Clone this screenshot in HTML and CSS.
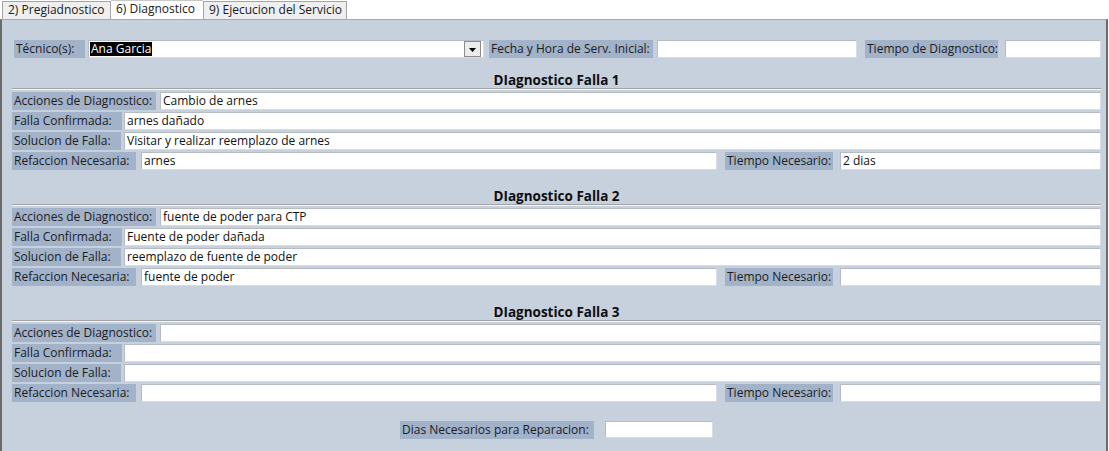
FILE: index.html
```html
<!DOCTYPE html>
<html>
<head>
<meta charset="utf-8">
<link rel="stylesheet" href="styles.css">
</head>
<body>
<div class="tabs">
  <div class="tab t1">2) Pregiadnostico</div>
  <div class="tab active t2">6) Diagnostico</div>
  <div class="tab t3">9) Ejecucion del Servicio</div>
</div>
<div class="panel">
  <div class="row top">
    <div class="lbl w-tec">Técnico(s):</div>
    <div class="inp combo ml3"><span class="sel">Ana Garcia</span><span class="drop"><svg width="7" height="4" viewBox="0 0 7 4"><path d="M0 0H7L3.5 4Z" fill="#000"/></svg></span></div>
    <div class="lbl w-fecha ml5">Fecha y Hora de Serv. Inicial:</div>
    <div class="inp w-fin ml4"></div>
    <div class="lbl w-tdiag ml8">Tiempo de Diagnostico:</div>
    <div class="inp w-tdin ml7"></div>
  </div>

  <div class="section s1">
    <div class="title">DIagnostico Falla 1</div>
    <div class="sep"></div>
    <div class="row"><div class="lbl w-acc">Acciones de Diagnostico:</div><div class="inp grow ml4">Cambio de arnes</div></div>
    <div class="row"><div class="lbl w-fal">Falla Confirmada:</div><div class="inp grow ml2">arnes dañado</div></div>
    <div class="row"><div class="lbl w-sol">Solucion de Falla:</div><div class="inp grow ml3">Visitar y realizar reemplazo de arnes</div></div>
    <div class="row"><div class="lbl w-ref">Refaccion Necesaria:</div><div class="inp w-refin ml5">arnes</div><div class="lbl w-tnec ml8">Tiempo Necesario:</div><div class="inp grow ml7">2 dias</div></div>
  </div>

  <div class="section s2">
    <div class="title">DIagnostico Falla 2</div>
    <div class="sep"></div>
    <div class="row"><div class="lbl w-acc">Acciones de Diagnostico:</div><div class="inp grow ml4">fuente de poder para CTP</div></div>
    <div class="row"><div class="lbl w-fal">Falla Confirmada:</div><div class="inp grow ml2">Fuente de poder dañada</div></div>
    <div class="row"><div class="lbl w-sol">Solucion de Falla:</div><div class="inp grow ml3">reemplazo de fuente de poder</div></div>
    <div class="row"><div class="lbl w-ref">Refaccion Necesaria:</div><div class="inp w-refin ml5">fuente de poder</div><div class="lbl w-tnec ml8">Tiempo Necesario:</div><div class="inp grow ml7"></div></div>
  </div>

  <div class="section s3">
    <div class="title">DIagnostico Falla 3</div>
    <div class="sep"></div>
    <div class="row"><div class="lbl w-acc">Acciones de Diagnostico:</div><div class="inp grow ml4"></div></div>
    <div class="row"><div class="lbl w-fal">Falla Confirmada:</div><div class="inp grow ml2"></div></div>
    <div class="row"><div class="lbl w-sol">Solucion de Falla:</div><div class="inp grow ml3"></div></div>
    <div class="row"><div class="lbl w-ref">Refaccion Necesaria:</div><div class="inp w-refin ml5"></div><div class="lbl w-tnec ml8">Tiempo Necesario:</div><div class="inp grow ml7"></div></div>
  </div>

  <div class="row dias">
    <div class="lbl w-dias">Dias Necesarios para Reparacion:</div>
    <div class="inp w-diasin ml11"></div>
  </div>
</div>
</body>
</html>
```

FILE: styles.css
```css
* { box-sizing: border-box; }
html, body { margin: 0; padding: 0; background: #ffffff; }
body {
  width: 1109px;
  height: 451px;
  overflow: hidden;
  font-family: "Open Sans", "Noto Sans", "DejaVu Sans", sans-serif;
  font-size: 12px;
  color: #1a1a1a;
}
.tabs {
  display: flex;
  height: 19px;
  padding-left: 2px;
  align-items: flex-end;
}
.tab {
  height: 18px;
  line-height: 16px;
  padding: 0 5px;
  background: #efefef;
  border: 1px solid #a4a4a4;
  border-bottom: none;
  font-size: 12px;
  color: #202020;
  white-space: nowrap;
}
.tab.active {
  height: 19px;
  background: #ffffff;
  line-height: 15px;
  border-color: #c8c8c8;
}
.t1 { width: 109px; }
.t2 { width: 92px; border-left: none; border-right: none; }
.t3 { width: 144px; }
.panel {
  height: 432px;
  width: 1108px;
  background: #c7d1dd;
  border-left: 2px solid #6a6a6a;
  border-right: 2px solid #6a6a6a;
  border-top: 1px solid #a8a8a8;
  padding: 20px 0 0 10px;
}
.row {
  display: flex;
  height: 18px;
  margin-bottom: 2px;
  width: 1089px;
}
.row.top { padding-left: 2px; }
.lbl {
  height: 18px;
  line-height: 17px;
  background: #a1b2c9;
  padding-left: 2px;
  white-space: nowrap;
  flex: none;
  color: #1c1c1c;
  overflow: hidden;
}
.inp {
  height: 18px;
  line-height: 16px;
  background: #ffffff;
  border: 1px solid #b6bcc4;
  border-right-color: #d8dce2;
  border-bottom-color: #d8dce2;
  padding-left: 2px;
  white-space: nowrap;
  flex: none;
  color: #111;
}
.grow { flex: 1 1 auto; }
.combo {
  width: 396px;
  position: relative;
  padding-left: 1px;
}
.sel {
  display: inline-block;
  background: #000;
  color: #fff;
  line-height: 14px;
  margin-top: 1px;
  padding: 0 1px;
}
.drop {
  position: absolute;
  right: 2px;
  top: 0;
  width: 17px;
  height: 16px;
  border: 1px solid #8c8c8c;
  background: #ececec;
  display: flex;
  align-items: center;
  justify-content: center;
}
.drop svg { display: block; margin-top: 2px; }
.ml2 { margin-left: 2px; }
.ml3 { margin-left: 3px; }
.ml4 { margin-left: 4px; }
.ml5 { margin-left: 5px; }
.ml7 { margin-left: 7px; }
.ml8 { margin-left: 8px; }
.ml11 { margin-left: 11px; }
.w-tec { width: 71px; }
.w-fecha { width: 164px; }
.w-fin { width: 200px; }
.w-tdiag { width: 133px; }
.w-tdin { width: 96px; }
.w-acc { width: 144px; }
.w-fal { width: 110px; }
.w-sol { width: 109px; }
.w-ref { width: 124px; }
.w-refin { width: 576px; }
.w-tnec { width: 108px; }
.w-dias { width: 194px; }
.w-diasin { width: 108px; }
.section { width: 1089px; }
.s1 { margin-top: 14px; }
.s2 { margin-top: 18px; }
.s3 { margin-top: 18px; }
.title {
  height: 16px;
  line-height: 16px;
  text-align: center;
  font-weight: bold;
  font-size: 13.5px;
  color: #0e0e0e;
}
.sep {
  height: 2px;
  border-top: 1px solid #a3a3a3;
  border-bottom: 1px solid #f4f6f8;
  margin-bottom: 2px;
}
.dias {
  margin-top: 19px;
  padding-left: 388px;
}
.dias .w-diasin { height: 17px; }
```
